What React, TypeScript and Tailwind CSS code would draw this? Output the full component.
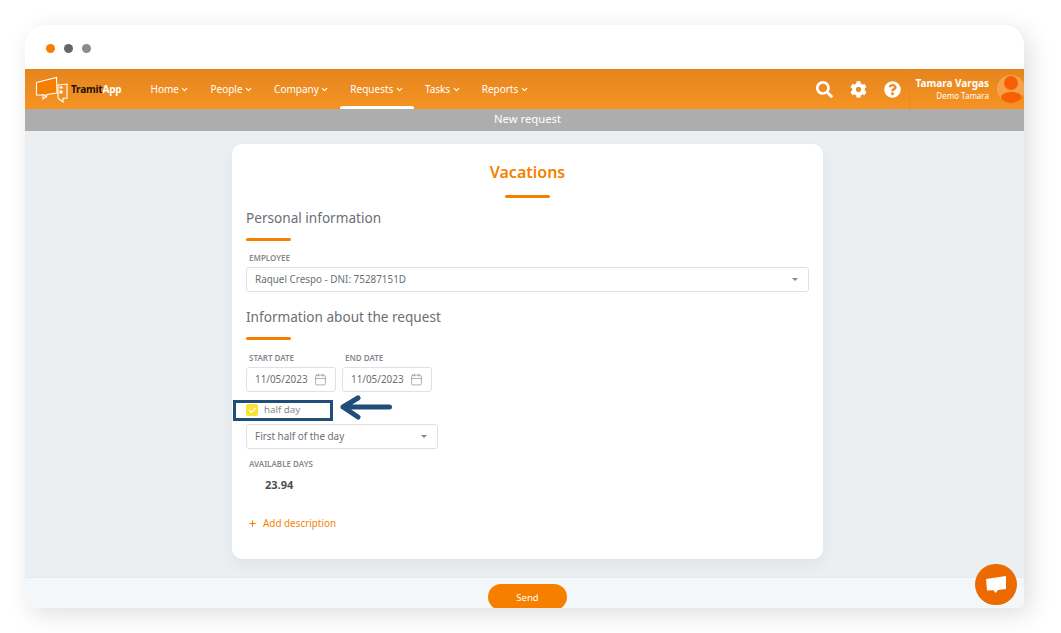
import { ChevronDown, Calendar, Plus, Check } from "lucide-react";
import { FaSearch, FaCog, FaQuestionCircle } from "react-icons/fa";

const F = "font-['Noto_Sans',sans-serif]";

function NavItem({ label, active }: { label: string; active?: boolean }) {
  return (
    <div className="relative flex h-full items-center px-[10.5px]">
      <span className="mt-[1px] text-[10px] text-white">{label}</span>
      <ChevronDown size={9} strokeWidth={3} className="ml-[1.5px] mt-[1px] text-white" />
      {active && <div className="absolute bottom-0 left-0 right-0 h-[3px] rounded-t-[2px] bg-white" />}
    </div>
  );
}

function Logo() {
  return (
    <div className="flex items-center">
      <svg width="36" height="27" viewBox="0 0 36 27">
        <path d="M1.5 6.5 L21.5 1.5 L22 17 L12 18.5 L11 21 L10 19 L1.5 19 Z" fill="#f77f00" stroke="#fff" strokeWidth="1.1" />
        <path d="M8 18 L8 23 L12 20" fill="none" stroke="#fff" strokeWidth="1.1" />
        <path d="M23 9 L32 8 L32 22 L28 22.5 L28 26 L24 23 L23 22 Z" fill="#f58f20" stroke="#fff" strokeWidth="1.1" />
        <rect x="24.5" y="10.5" width="3" height="2" fill="#fff" />
        <rect x="24.5" y="14.5" width="3" height="3" fill="#fff" />
      </svg>
      <span className="text-[10px] font-bold tracking-[-0.2px] text-[#1c1208]">Tramit</span>
      <span className="text-[10px] font-bold tracking-[-0.2px] text-white">App</span>
    </div>
  );
}

function SectionTitle({ children, mt }: { children: string; mt: string }) {
  return (
    <div className={mt}>
      <div className="text-[13.6px] leading-[20px] text-[#6b6f73]">{children}</div>
      <div className="mt-[10px] h-[3px] w-[45px] rounded-full bg-[#f77f00]" />
    </div>
  );
}

function Label({ children }: { children: string }) {
  return <div className="pl-[3px] text-[8px] font-semibold leading-[10px] text-[#85888b]">{children}</div>;
}

function DateField({ value }: { value: string }) {
  return (
    <div className="flex h-[25px] w-[90px] items-center rounded-[3px] border border-[#dfe1e3] bg-white pl-[8px]">
      <span className="text-[9.9px] text-[#6b6f73]">{value}</span>
      <Calendar size={13} strokeWidth={1} className="ml-[6px] text-[#6b6f73]" />
    </div>
  );
}

function Select({ value, className }: { value: string; className: string }) {
  return (
    <div className={`flex h-[25px] items-center justify-between rounded-[3px] border border-[#dfe1e3] bg-white pl-[8px] pr-[10px] ${className}`}>
      <span className="text-[9.9px] text-[#6b6f73]">{value}</span>
      <div className="h-0 w-0 border-x-[3.5px] border-t-[3.5px] border-x-transparent border-t-[#85888b]" />
    </div>
  );
}

export default function App() {
  return (
    <div className={`${F} relative h-[633px] w-[1061px] overflow-hidden bg-white pl-[25px] pt-[25px]`}>
      <div className="flex h-[583px] w-[999px] flex-col overflow-hidden rounded-t-[20px] rounded-b-[8px] bg-white shadow-[6px_6px_24px_rgba(0,0,0,0.13)]">
        <div className="flex h-[44px] shrink-0 items-center gap-[9px] pl-[21px] pt-[2px]">
          <div className="h-[9px] w-[9px] rounded-full bg-[#f77f00]" />
          <div className="h-[9px] w-[9px] rounded-full bg-[#666666]" />
          <div className="h-[9px] w-[9px] rounded-full bg-[#8c8c8c]" />
        </div>

        <div className="flex h-[40px] shrink-0 items-center bg-gradient-to-b from-[#e5851f] to-[#f59322]">
          <div className="ml-[10px] w-[105px]"><Logo /></div>
          <div className="flex h-full items-center">
            <NavItem label="Home" />
            <NavItem label="People" />
            <NavItem label="Company" />
            <NavItem label="Requests" active />
            <NavItem label="Tasks" />
            <NavItem label="Reports" />
          </div>
          <div className="ml-auto flex h-full items-center">
            <FaSearch size={17} className="text-white" />
            <FaCog size={17} className="ml-[17px] text-white" />
            <FaQuestionCircle size={17} className="ml-[17px] text-white" />
            <div className="ml-[8px] flex h-full flex-col items-end justify-center border-l border-[#e98a1f] pl-[5px] pr-[8px]">
              <span className="text-[10px] font-bold leading-[13px] text-white">Tamara Vargas</span>
              <span className="text-[8px] leading-[11px] text-white">Demo Tamara</span>
            </div>
            <div className="h-[28px] w-[27px] overflow-hidden">
              <div className="relative h-[28px] w-[28px] overflow-hidden rounded-full bg-[#f7a24a]">
                <div className="absolute left-[7px] top-[1px] h-[14px] w-[14px] rounded-full bg-[#f75f00]" />
                <div className="absolute left-[4px] top-[17px] h-[11px] w-[21px] rounded-[50%] bg-[#f75f00]" />
              </div>
            </div>
          </div>
        </div>

        <div className="flex h-[22px] shrink-0 items-center justify-center bg-[#adadad] pb-[1px] pl-[6px] text-[11.3px] text-white">New request</div>

        <div className="min-h-0 flex-1 bg-[#ebeff2] pl-[207px] pt-[13px]">
          <div className="h-[415px] w-[591px] rounded-[10px] bg-white px-[14px] shadow-[0_6px_16px_rgba(0,0,0,0.05)]">
            <div className="pt-[17px] text-center text-[16px] font-semibold leading-[23px] text-[#f77f00]">Vacations</div>
            <div className="mx-auto mt-[11px] h-[3px] w-[45px] rounded-full bg-[#f77f00]" />

            <SectionTitle mt="mt-[10px]">Personal information</SectionTitle>

            <div className="mt-[12px]"><Label>EMPLOYEE</Label></div>
            <Select value="Raquel Crespo - DNI: 75287151D" className="mt-[4px] w-full" />

            <SectionTitle mt="mt-[15px]">Information about the request</SectionTitle>

            <div className="mt-[13px] flex gap-[6px]">
              <div className="w-[90px]"><Label>START DATE</Label></div>
              <div className="w-[90px]"><Label>END DATE</Label></div>
            </div>
            <div className="mt-[4px] flex gap-[6px]">
              <DateField value="11/05/2023" />
              <DateField value="11/05/2023" />
            </div>

            <div className="relative mt-[6px] flex h-[22px] items-center pt-[2px]">
              <div className="absolute -left-[13px] top-[2px] h-[21px] w-[100px] border-[3px] border-[#1f4e79]" />
              <div className="flex h-[12px] w-[12px] items-center justify-center rounded-[2px] bg-[#f9e232]">
                <Check size={9} strokeWidth={3.5} className="text-white" />
              </div>
              <span className="ml-[6px] text-[9.7px] text-[#85888b]">half day</span>
              <svg className="absolute left-[93px] top-[-3px]" width="54" height="26" viewBox="0 0 54 26">
                <path d="M50.5 12 H4 M19 3 L4 12 L19 22" fill="none" stroke="#1f4e79" strokeWidth="5" strokeLinecap="round" strokeLinejoin="round" />
              </svg>
            </div>

            <Select value="First half of the day" className="mt-[4px] w-[192px]" />

            <div className="mt-[10px]"><Label>AVAILABLE DAYS</Label></div>
            <div className="mt-[8px] pl-[19px] text-[11px] font-bold leading-[16px] text-[#4a4f55]">23.94</div>

            <div className="mt-[23px] flex items-center pl-[2px] text-[#f77f00]">
              <Plus size={9} strokeWidth={3} />
              <span className="ml-[6px] text-[9.9px]">Add description</span>
            </div>
          </div>
        </div>

        <div className="flex h-[31px] shrink-0 justify-center overflow-hidden border-t border-[#e6eaee] bg-[#f4f7fa] pl-[6px] pt-[6px]">
          <div className="flex h-[26px] w-[79px] shrink-0 items-center justify-center rounded-full bg-[#f77f00] pt-[2px] text-[9.5px] text-white">Send</div>
        </div>
      </div>

      <div className="absolute left-[975px] top-[564px] flex h-[41px] w-[42px] items-center justify-center rounded-full bg-[#ec6a00]">
        <svg width="20" height="18" viewBox="0 0 20 18">
          <path d="M0 3 L20 0 L20 13 L12 14 L9.5 17 L7.5 14.3 L1 14.5 Z" fill="#fff" />
        </svg>
      </div>
    </div>
  );
}
